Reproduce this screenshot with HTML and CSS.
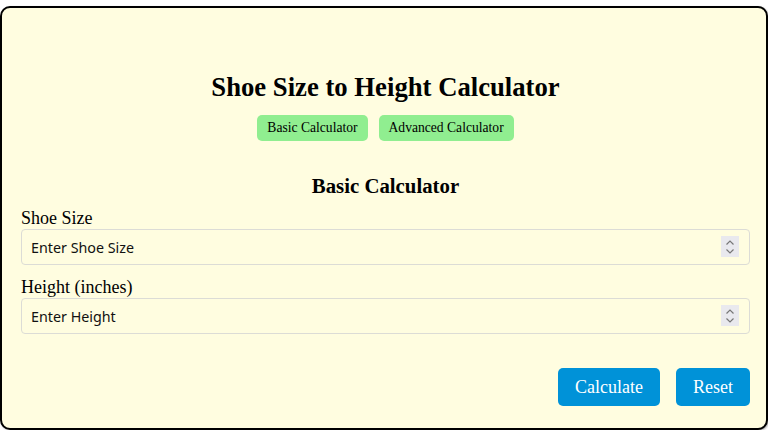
FILE: index.html
```html
<!DOCTYPE html>
<html lang="en">
<head>
<meta charset="utf-8">
<title>Shoe Size to Height Calculator</title>
<link rel="stylesheet" href="styles.css">
</head>
<body>
<div class="card">
  <h1 class="title">Shoe Size to Height Calculator</h1>
  <div class="tabs">
    <button class="tab">Basic Calculator</button>
    <button class="tab">Advanced Calculator</button>
  </div>
  <h2 class="subtitle">Basic Calculator</h2>
  <label class="label" for="shoe">Shoe Size</label>
  <div class="field">
    <input class="input" id="shoe" type="text" placeholder="Enter Shoe Size">
    <span class="spin"><svg width="10" height="16" viewBox="0 0 10 16"><path d="M1.5 5.5 L5 2 L8.5 5.5 M1.5 10.5 L5 14 L8.5 10.5" fill="none" stroke="#777" stroke-width="1.2"/></svg></span>
  </div>
  <label class="label second" for="height">Height (inches)</label>
  <div class="field">
    <input class="input" id="height" type="text" placeholder="Enter Height">
    <span class="spin"><svg width="10" height="16" viewBox="0 0 10 16"><path d="M1.5 5.5 L5 2 L8.5 5.5 M1.5 10.5 L5 14 L8.5 10.5" fill="none" stroke="#777" stroke-width="1.2"/></svg></span>
  </div>
  <div class="actions">
    <button class="btn">Calculate</button>
    <button class="btn">Reset</button>
  </div>
</div>
</body>
</html>
```
FILE: styles.css
```css
html, body {
  margin: 0;
  padding: 0;
  background: #ffffff;
}
body {
  font-family: "Liberation Serif", "Times New Roman", serif;
  color: #000;
}
.card {
  margin-top: 6px;
  width: 768px;
  height: 424px;
  box-sizing: border-box;
  border: 2px solid #000;
  border-radius: 10px;
  background: #fffde0;
  padding: 64px 16px 0 19px;
  display: flex;
  flex-direction: column;
  box-shadow: 1px 1px 2px rgba(0,0,0,0.3);
}
.title {
  margin: 0;
  font-size: 26.7px;
  line-height: 30px;
  font-weight: bold;
  text-align: center;
}
.tabs {
  margin-top: 13px;
  display: flex;
  justify-content: center;
  gap: 11px;
}
.tab {
  font-family: "Liberation Serif", "Times New Roman", serif;
  font-size: 13.6px;
  line-height: 16px;
  height: 26px;
  padding: 0 10px;
  border: none;
  border-radius: 5px;
  background: #90ee90;
  color: #000;
}
.subtitle {
  margin: 33px 0 0;
  font-size: 20.8px;
  line-height: 24px;
  font-weight: bold;
  text-align: center;
}
.label {
  margin-top: 10px;
  font-size: 18px;
  line-height: 21px;
}
.label.second {
  margin-top: 12px;
}
.field {
  position: relative;
  height: 36px;
}
.input {
  width: 100%;
  height: 36px;
  box-sizing: border-box;
  border: 1px solid #dcdcd6;
  border-radius: 4px;
  background: transparent;
  padding: 0 9px;
  font-family: "Noto Sans", "DejaVu Sans", sans-serif;
  font-size: 14.3px;
  color: #111;
}
.input::placeholder {
  color: #111;
  opacity: 1;
}
.spin {
  position: absolute;
  right: 11px;
  top: 7px;
  width: 18px;
  height: 21px;
  background: #e9e9ee;
  display: flex;
  align-items: center;
  justify-content: center;
}
.actions {
  margin-top: 34px;
  display: flex;
  justify-content: flex-end;
  gap: 16px;
}
.btn {
  font-family: "Liberation Serif", "Times New Roman", serif;
  font-size: 18px;
  line-height: 22px;
  height: 38px;
  padding: 0 17px;
  border: none;
  border-radius: 5px;
  background: #0092d8;
  color: #fff;
}
```
